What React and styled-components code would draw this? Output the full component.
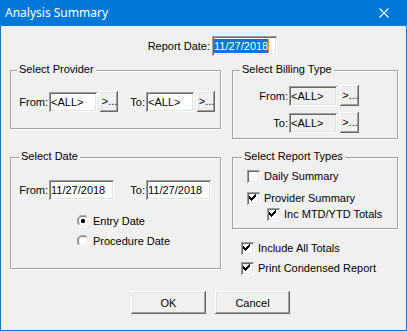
import React from 'react';
import styled, { createGlobalStyle } from 'styled-components';

const GlobalStyle = createGlobalStyle`
  html, body {
    margin: 0;
    padding: 0;
    background: #f0f0f0;
  }
  body {
    font-family: "Liberation Sans", Arial, sans-serif;
    font-size: 11px;
    color: #000;
  }
`;

const sunken = `
  box-shadow: inset 1px 1px 0 #a0a0a0, inset -1px -1px 0 #fff,
    inset 2px 2px 0 #696969, inset -2px -2px 0 #e3e3e3;
`;

const raised = `
  box-shadow: inset -1px -1px 0 #696969, inset 1px 1px 0 #fff,
    inset -2px -2px 0 #a0a0a0, inset 2px 2px 0 #e3e3e3;
`;

const CHECK_PIXELS = [
  [3, 5], [3, 6], [3, 7],
  [4, 6], [4, 7], [4, 8],
  [5, 7], [5, 8], [5, 9],
  [6, 6], [6, 7], [6, 8],
  [7, 5], [7, 6], [7, 7],
  [8, 4], [8, 5], [8, 6],
  [9, 3], [9, 4], [9, 5],
];

const CheckBox = ({ checked }) => (
  <BoxSquare>
    {checked && (
      <svg width="13" height="13" viewBox="0 0 13 13" shapeRendering="crispEdges">
        {CHECK_PIXELS.map(([x, y]) => (
          <rect key={x + '-' + y} x={x - 1} y={y - 1} width="1" height="1" fill="#000" />
        ))}
      </svg>
    )}
  </BoxSquare>
);

const Radio = ({ checked }) => (
  <svg width="12" height="12" viewBox="0 0 12 12">
    <circle cx="6" cy="6" r="5.5" fill="#fff" />
    <path d="M1.8 10.2 A5.5 5.5 0 0 1 10.2 1.8" fill="none" stroke="#a0a0a0" strokeWidth="1" />
    <path d="M10.2 1.8 A5.5 5.5 0 0 1 1.8 10.2" fill="none" stroke="#fff" strokeWidth="1" />
    <path d="M2.6 9.4 A4.5 4.5 0 0 1 9.4 2.6" fill="none" stroke="#696969" strokeWidth="1" />
    <path d="M9.4 2.6 A4.5 4.5 0 0 1 2.6 9.4" fill="none" stroke="#e3e3e3" strokeWidth="1" />
    {checked && <rect x="4" y="4" width="4" height="4" rx="1.2" fill="#000" />}
  </svg>
);

const CloseIcon = () => (
  <svg width="10" height="10" viewBox="0 0 10 10">
    <path d="M0.5 0.5 L9.5 9.5 M9.5 0.5 L0.5 9.5" stroke="#fff" strokeWidth="1.1" />
  </svg>
);

export default function App() {
  return (
    <>
      <GlobalStyle />
      <Window>
        <TitleBar>
          <Title>Analysis Summary</Title>
          <CloseBox>
            <CloseIcon />
          </CloseBox>
        </TitleBar>

        <Body>
          <ReportRow>
            <Label $w={59}>Report Date:</Label>
            <Field $w={65}>
              <Selected>11/27/2018</Selected>
            </Field>
          </ReportRow>

          <Columns>
            <Group $h={59}>
              <GroupTitle $l={6}>Select Provider</GroupTitle>
              <LineRow $pt={20} $pl={11}>
                <Label $w={26}>From:</Label>
                <Field $w={48} $ml={0}>&lt;ALL&gt;</Field>
                <PickButton>&gt;...</PickButton>
                <Label $w={16} $ml={11}>To:</Label>
                <Field $w={48}>&lt;ALL&gt;</Field>
                <PickButton>&gt;...</PickButton>
              </LineRow>
            </Group>

            <Group $h={69}>
              <GroupTitle $l={7}>Select Billing Type</GroupTitle>
              <BillingGrid>
                <Label $w={55}>From:</Label>
                <Field $w={48} $disabled>&lt;ALL&gt;</Field>
                <PickButton $w={19} $ml={2}>&gt;...</PickButton>
                <Label $w={55}>To:</Label>
                <Field $w={48} $disabled>&lt;ALL&gt;</Field>
                <PickButton $w={19} $ml={2}>&gt;...</PickButton>
              </BillingGrid>
            </Group>

            <Group $h={112}>
              <GroupTitle $l={8}>Select Date</GroupTitle>
              <LineRow $pt={22} $pl={11}>
                <Label $w={26}>From:</Label>
                <Field $w={65}>11/27/2018</Field>
                <Label $w={16} $ml={15}>To:</Label>
                <Field $w={65}>11/27/2018</Field>
              </LineRow>
              <RadioList>
                <OptionRow>
                  <Radio checked />
                  <span>Entry Date</span>
                </OptionRow>
                <OptionRow>
                  <Radio />
                  <span>Procedure Date</span>
                </OptionRow>
              </RadioList>
            </Group>

            <RightStack>
              <Group $h={72}>
                <GroupTitle $l={9}>Select Report Types</GroupTitle>
                <CheckList>
                  <CheckRow $h={16}>
                    <CheckBox />
                    <span>Daily Summary</span>
                  </CheckRow>
                  <CheckRow $h={16} $mt={6}>
                    <CheckBox checked />
                    <span>Provider Summary</span>
                  </CheckRow>
                  <CheckRow $h={16} $indent={20}>
                    <CheckBox checked />
                    <span>Inc MTD/YTD Totals</span>
                  </CheckRow>
                </CheckList>
              </Group>
              <LooseChecks>
                <CheckRow $h={20}>
                  <CheckBox checked />
                  <span>Include All Totals</span>
                </CheckRow>
                <CheckRow $h={20}>
                  <CheckBox checked />
                  <span>Print Condensed Report</span>
                </CheckRow>
              </LooseChecks>
            </RightStack>
          </Columns>

          <ButtonRow>
            <DialogButton>OK</DialogButton>
            <DialogButton>Cancel</DialogButton>
          </ButtonRow>
        </Body>
      </Window>
    </>
  );
}

const Window = styled.div`
  width: 407px;
  height: 331px;
  box-sizing: border-box;
  border: 1px solid #0078d7;
  border-top: none;
  background: #f0f0f0;
  display: flex;
  flex-direction: column;
`;

const TitleBar = styled.div`
  height: 26px;
  margin: 0 -1px;
  background: #0078d7;
  color: #fff;
  display: flex;
  align-items: center;
  justify-content: space-between;
  padding-left: 5px;
`;

const Title = styled.div`
  font-family: "Noto Sans", "Open Sans", sans-serif;
  font-size: 12px;
  line-height: 16px;
`;

const CloseBox = styled.div`
  width: 46px;
  height: 26px;
  display: flex;
  align-items: center;
  justify-content: center;
`;

const Body = styled.div`
  padding: 10px 9px 0 9px;
`;

const ReportRow = styled.div`
  display: flex;
  align-items: center;
  gap: 2px;
  padding-left: 141px;
  height: 20px;
`;

const Label = styled.div`
  width: ${(p) => p.$w}px;
  margin-left: ${(p) => p.$ml || 0}px;
  display: flex;
  justify-content: flex-end;
  white-space: nowrap;
  flex-shrink: 0;
`;

const Field = styled.div`
  width: ${(p) => p.$w}px;
  height: 20px;
  box-sizing: border-box;
  flex-shrink: 0;
  display: flex;
  align-items: center;
  padding: 0 2px;
  background: ${(p) => (p.$disabled ? '#f0f0f0' : '#fff')};
  white-space: nowrap;
  overflow: hidden;
  ${sunken}
`;

const Selected = styled.span`
  background: #0078d7;
  color: #fff;
  line-height: 14px;
  border-right: 1px solid #ff8c00;
`;

const PickButton = styled.button`
  width: ${(p) => p.$w || 18}px;
  height: 21px;
  margin-left: ${(p) => (p.$ml === undefined ? 3 : p.$ml)}px;
  padding: 0 0 2px 1px;
  border: none;
  background: #f0f0f0;
  font: inherit;
  color: #000;
  flex-shrink: 0;
  ${raised}
`;

const Columns = styled.div`
  margin-top: 14px;
  display: grid;
  grid-template-columns: 211px 166px;
  column-gap: 11px;
  row-gap: 18px;
  align-items: start;
`;

const Group = styled.div`
  position: relative;
  box-sizing: border-box;
  height: ${(p) => p.$h}px;
  border: 1px solid #a0a0a0;
  box-shadow: inset 1px 1px 0 #fff, 1px 1px 0 #fff;
`;

const GroupTitle = styled.div`
  position: absolute;
  top: -8px;
  left: ${(p) => p.$l}px;
  padding: 0 2px;
  line-height: 13px;
  background: #f0f0f0;
  white-space: nowrap;
`;

const LineRow = styled.div`
  display: flex;
  align-items: center;
  padding: ${(p) => p.$pt}px 0 0 ${(p) => p.$pl}px;
  & > ${Field} {
    margin-left: 1px;
  }
`;

const BillingGrid = styled.div`
  display: grid;
  grid-template-columns: 55px 48px 21px;
  column-gap: 1px;
  row-gap: 6px;
  align-items: center;
  padding-top: 14px;
`;

const RadioList = styled.div`
  display: flex;
  flex-direction: column;
  padding: 11px 0 0 66px;
`;

const OptionRow = styled.div`
  display: flex;
  align-items: center;
  gap: 4px;
  height: 20px;
`;

const RightStack = styled.div`
  display: flex;
  flex-direction: column;
`;

const CheckList = styled.div`
  display: flex;
  flex-direction: column;
  padding: 10px 0 0 14px;
`;

const CheckRow = styled.div`
  display: flex;
  align-items: center;
  gap: 4px;
  height: ${(p) => p.$h}px;
  margin-top: ${(p) => p.$mt || 0}px;
  padding-left: ${(p) => p.$indent || 0}px;
  white-space: nowrap;
`;

const BoxSquare = styled.span`
  width: 13px;
  height: 13px;
  box-sizing: border-box;
  background: #fff;
  flex-shrink: 0;
  display: block;
  ${sunken}
  svg {
    display: block;
  }
`;

const LooseChecks = styled.div`
  display: flex;
  flex-direction: column;
  margin-top: 9px;
  padding-left: 9px;
`;

const ButtonRow = styled.div`
  display: flex;
  gap: 9px;
  margin-top: 13px;
  padding-left: 121px;
`;

const DialogButton = styled.button`
  width: 75px;
  height: 23px;
  padding: 0;
  border: none;
  background: #f0f0f0;
  font: inherit;
  color: #000;
  ${raised}
`;
